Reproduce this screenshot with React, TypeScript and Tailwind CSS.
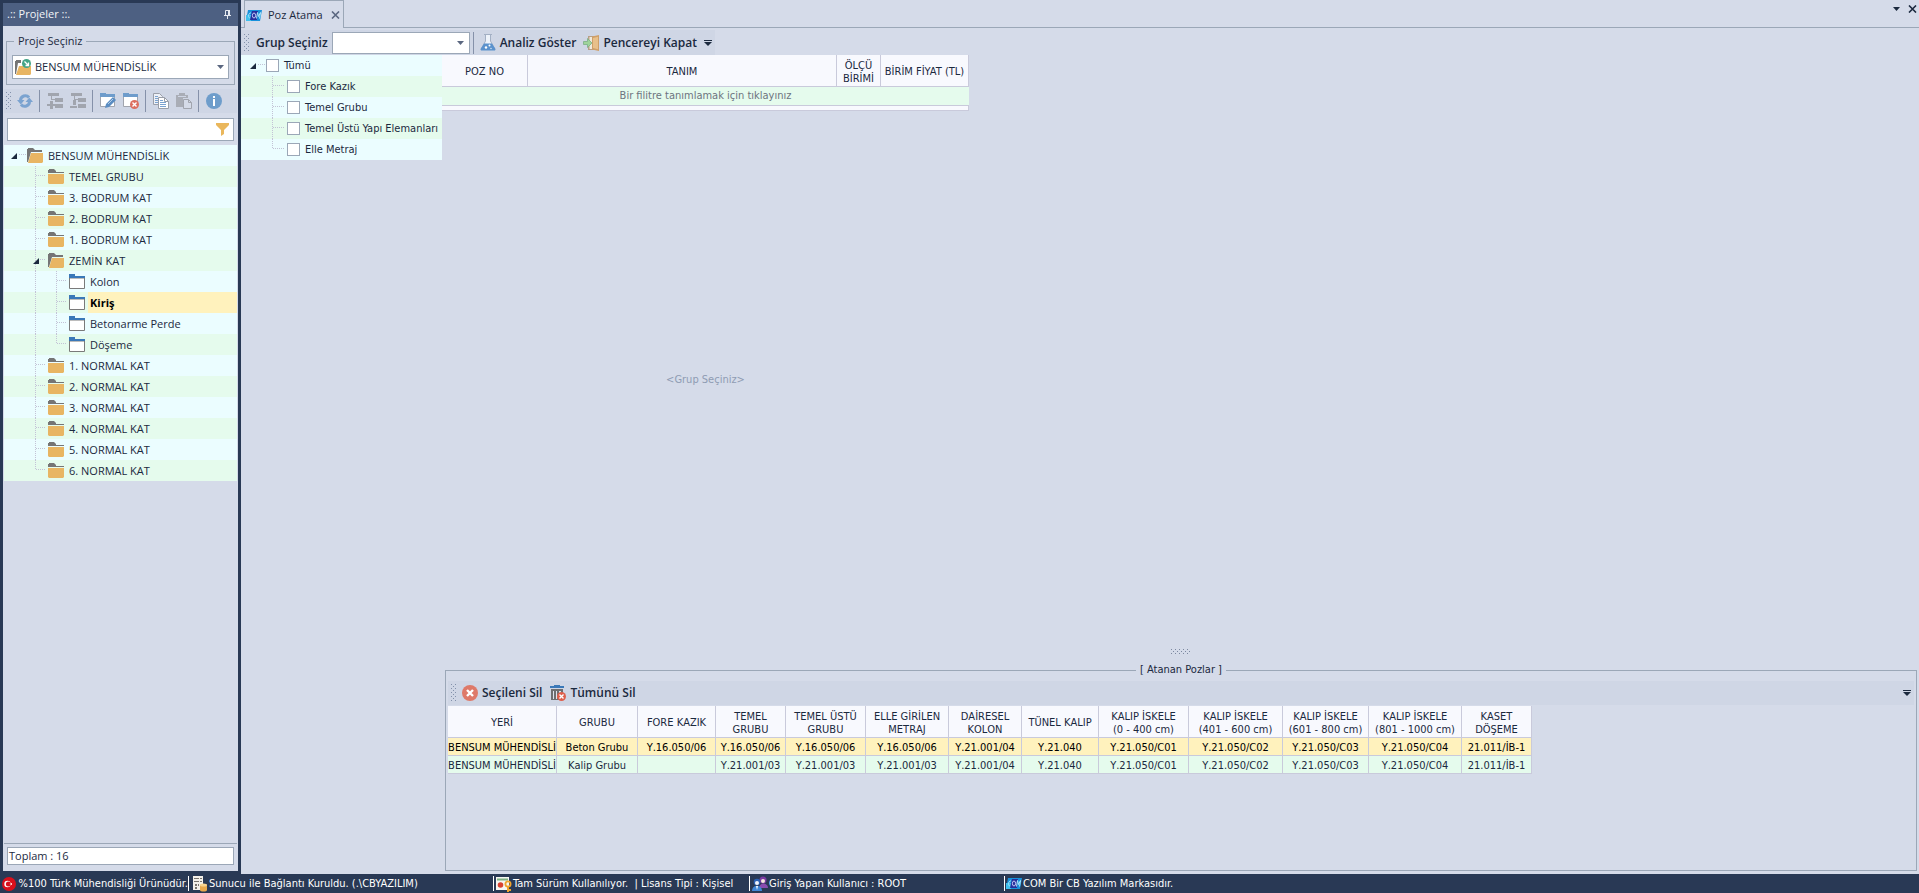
import React from 'react';
import { clsx } from 'clsx';

type NodeIcon = 'open' | 'closed' | 'window';

interface TreeNode {
  label: string;
  level: number;
  icon: NodeIcon;
  expanded?: boolean;
  selected?: boolean;
  last?: boolean;
}

const projectNodes: TreeNode[] = [
  { label: 'BENSUM MÜHENDİSLİK', level: 0, icon: 'open', expanded: true },
  { label: 'TEMEL GRUBU', level: 1, icon: 'closed' },
  { label: '3. BODRUM KAT', level: 1, icon: 'closed' },
  { label: '2. BODRUM KAT', level: 1, icon: 'closed' },
  { label: '1. BODRUM KAT', level: 1, icon: 'closed' },
  { label: 'ZEMİN KAT', level: 1, icon: 'open', expanded: true },
  { label: 'Kolon', level: 2, icon: 'window' },
  { label: 'Kiriş', level: 2, icon: 'window', selected: true },
  { label: 'Betonarme Perde', level: 2, icon: 'window' },
  { label: 'Döşeme', level: 2, icon: 'window', last: true },
  { label: '1. NORMAL KAT', level: 1, icon: 'closed' },
  { label: '2. NORMAL KAT', level: 1, icon: 'closed' },
  { label: '3. NORMAL KAT', level: 1, icon: 'closed' },
  { label: '4. NORMAL KAT', level: 1, icon: 'closed' },
  { label: '5. NORMAL KAT', level: 1, icon: 'closed' },
  { label: '6. NORMAL KAT', level: 1, icon: 'closed', last: true },
];

const groups = ['Fore Kazık', 'Temel Grubu', 'Temel Üstü Yapı Elemanları', 'Elle Metraj'];

const assignedColumns = [
  { title: ['YERİ'], width: 'w-[109px]' },
  { title: ['GRUBU'], width: 'w-[81px]' },
  { title: ['FORE KAZIK'], width: 'w-[78px]' },
  { title: ['TEMEL', 'GRUBU'], width: 'w-[70px]' },
  { title: ['TEMEL ÜSTÜ', 'GRUBU'], width: 'w-[80px]' },
  { title: ['ELLE GİRİLEN', 'METRAJ'], width: 'w-[83px]' },
  { title: ['DAİRESEL', 'KOLON'], width: 'w-[73px]' },
  { title: ['TÜNEL KALIP'], width: 'w-[77px]' },
  { title: ['KALIP İSKELE', '(0 - 400 cm)'], width: 'w-[90px]' },
  { title: ['KALIP İSKELE', '(401 - 600 cm)'], width: 'w-[94px]' },
  { title: ['KALIP İSKELE', '(601 - 800 cm)'], width: 'w-[86px]' },
  { title: ['KALIP İSKELE', '(801 - 1000 cm)'], width: 'w-[93px]' },
  { title: ['KASET', 'DÖŞEME'], width: 'w-[70px]' },
];

const assignedRows = [
  ['BENSUM MÜHENDİSLİ', 'Beton Grubu', 'Y.16.050/06', 'Y.16.050/06', 'Y.16.050/06', 'Y.16.050/06', 'Y.21.001/04', 'Y.21.040', 'Y.21.050/C01', 'Y.21.050/C02', 'Y.21.050/C03', 'Y.21.050/C04', '21.011/İB-1'],
  ['BENSUM MÜHENDİSLİ', 'Kalip Grubu', '', 'Y.21.001/03', 'Y.21.001/03', 'Y.21.001/03', 'Y.21.001/04', 'Y.21.040', 'Y.21.050/C01', 'Y.21.050/C02', 'Y.21.050/C03', 'Y.21.050/C04', '21.011/İB-1'],
];

/* ---------- icons ---------- */

const ClosedFolder = () => (
  <svg width="16" height="15" viewBox="0 0 16 15" className="shrink-0">
    <path d="M0 4V1h1V0h5l2 2v1h8v1z" fill="#757575" />
    <path d="M0 5h16v9l-1 1H1l-1-1z" fill="#e8b563" />
  </svg>
);

const OpenFolder = () => (
  <svg width="16" height="15" viewBox="0 0 16 15" className="shrink-0">
    <path d="M0 14V1h1V0h5l2 2h7v2H4L1 14z" fill="#757575" />
    <path d="M4 5h12v9l-1 1H1z" fill="#e8b563" />
  </svg>
);

const WindowFolder = () => (
  <svg width="16" height="15" viewBox="0 0 16 15" className="shrink-0">
    <path d="M0 4V0h6v2h10v2z" fill="#3a78b8" />
    <path d="M.5 4v10.500h15V4z" fill="#fff" stroke="#7a7a7a" />
    <path d="M0 3h16v1H0z" fill="#3a78b8" />
  </svg>
);

const ProjectIcon = () => (
  <svg width="16" height="16" viewBox="0 0 16 16" className="shrink-0">
    <path d="M0 15V2h1V1h5v3H3L1 15z" fill="#757575" />
    <path d="M4 7h12v8l-1 1H1z" fill="#e8b563" />
    <circle cx="11.500" cy="4.500" r="4.500" fill="#43a488" />
    <path d="M9.500 2.500l4 4M13.500 3.500v3h-3" fill="none" stroke="#fff" strokeWidth="1.300" />
  </svg>
);

const PinIcon = () => (
  <svg width="7" height="9" viewBox="0 0 7 9">
    <path d="M1.500 5V.5h4V5M0 5.500h7M3.500 6v3" fill="none" stroke="#e6eaf2" />
    <path d="M4 0h2v5H4z" fill="#e6eaf2" />
  </svg>
);

const RefreshIcon = () => (
  <svg width="16" height="16" viewBox="0 0 16 16">
    <path d="M3.500 7.500A4.800 4.800 0 0 1 12 4.500M12.500 8.500A4.800 4.800 0 0 1 4 11.500" fill="none" stroke="#7ba3d0" strokeWidth="3" />
    <path d="M0 7h7.500l-3.700 4.500zM8.500 9H16l-3.700-4.500z" fill="#7ba3d0" />
  </svg>
);

const AddNodeIcon = () => (
  <svg width="16" height="16" viewBox="0 0 16 16" fill="#a1a5ae">
    <path d="M1 0h11v3H1zM8 5h8v4H8zM8 11h8v4H8zM4 3h1v4H4zM5 6h3v1H5z" />
    <path d="M3 8h3v3h3v2H6v3H3v-3H0v-2h3z" />
  </svg>
);

const NodeListIcon = () => (
  <svg width="16" height="16" viewBox="0 0 16 16" fill="#a1a5ae">
    <path d="M1 0h11v3H1zM8 5h8v4H8zM8 11h8v4H8zM4 3h1v4H4zM5 6h3v1H5zM3 7h3v5H3zM0 13h7v2H0z" />
  </svg>
);

const FolderEditIcon = () => (
  <svg width="16" height="16" viewBox="0 0 16 16">
    <path d="M.5 3v10.500h14V3z" fill="#fff" stroke="#a1a5ae" />
    <path d="M0 3V0h6v1h9v3H0z" fill="#6e9ccb" />
    <path d="M5 15l1-4 7-7 3 3-7 7z" fill="#5b8dc2" />
    <path d="M8 11l5-5" stroke="#b5cde6" />
  </svg>
);

const FolderDeleteIcon = () => (
  <svg width="16" height="16" viewBox="0 0 16 16">
    <path d="M.5 3v10.500h14V3z" fill="#fff" stroke="#a1a5ae" />
    <path d="M0 3V0h6v1h9v3H0z" fill="#6e9ccb" />
    <circle cx="11.500" cy="11.500" r="4.500" fill="#dc6f60" />
    <path d="M9.500 9.500l4 4m0-4l-4 4" stroke="#fff" strokeWidth="1.400" />
  </svg>
);

const CopyIcon = () => (
  <svg width="16" height="16" viewBox="0 0 16 16">
    <path d="M.5.500h6l3 3v8h-9z" fill="#eef1f7" stroke="#9a9fa9" />
    <path d="M2 3.500h3M2 5.500h4M2 7.500h3M2 9.500h3" stroke="#7ba3d0" />
    <path d="M5.500 4.500h6l4 4v7h-10z" fill="#fff" stroke="#9a9fa9" />
    <path d="M11.500 4.500v4h4" fill="none" stroke="#9a9fa9" />
    <path d="M7 7.500h3M7 9.500h6M7 11.500h6M7 13.500h6" stroke="#7ba3d0" />
  </svg>
);

const PasteIcon = () => (
  <svg width="16" height="16" viewBox="0 0 16 16">
    <path d="M0 2h3V0h6v2h3v3H7v9H0z" fill="#a9adb6" />
    <path d="M2 3.500h8" stroke="#cfd6e5" />
    <path d="M7.500 6.500h5l3 3v6h-8z" fill="#d5dbe8" stroke="#a1a5ae" />
    <path d="M12.500 6.500v3h3" fill="none" stroke="#a1a5ae" />
  </svg>
);

const InfoIcon = () => (
  <svg width="16" height="16" viewBox="0 0 16 16">
    <circle cx="8" cy="8" r="8" fill="#6e9dcb" />
    <path d="M7 3h2v2H7zM7 6h2v7H7z" fill="#fff" />
  </svg>
);

const FunnelIcon = () => (
  <svg width="13" height="13" viewBox="0 0 13 13">
    <path d="M0 0h13v2L8 7v4l-3 2V7L0 2z" fill="#eab75c" />
  </svg>
);

const FlaskIcon = () => (
  <svg width="16" height="17" viewBox="0 0 16 17" className="shrink-0">
    <path d="M5.500 1v6L1 15.500h14L10.500 7V1" fill="#eef3fa" stroke="#a3b0c4" />
    <path d="M4 .5h8" stroke="#a3b0c4" />
    <path d="M4 9.500h8L15.500 15l-.5 1.500H1L.5 15z" fill="#5b92cd" />
    <circle cx="6" cy="13.500" r="1.200" fill="#fff" />
    <circle cx="9.500" cy="11.500" r="1" fill="#fff" />
    <circle cx="11" cy="14.500" r=".8" fill="#cfe0f3" />
  </svg>
);

const DoorIcon = () => (
  <svg width="16" height="16" viewBox="0 0 16 16" className="shrink-0">
    <path d="M5 1h10v14H5z" fill="#b89f86" />
    <path d="M6.500 2h3v12h-3z" fill="#efe9dc" />
    <path d="M9 1.500L16 0v16l-7-1.500z" fill="#cf9f68" />
    <path d="M10 3l5-1.200v12.400L10 13z" fill="#e8c08a" />
    <path d="M.5 6.500h4v-3L9 8l-4.500 4.500v-3h-4z" fill="#9fd49b" stroke="#7cae86" strokeWidth=".8" />
  </svg>
);

const DeleteIcon = () => (
  <svg width="16" height="16" viewBox="0 0 16 16" className="shrink-0">
    <circle cx="8" cy="8" r="8" fill="#de7969" />
    <path d="M5 5l6 6m0-6l-6 6" stroke="#fff" strokeWidth="2.400" />
  </svg>
);

const TrashIcon = () => (
  <svg width="16" height="16" viewBox="0 0 16 16" className="shrink-0">
    <path d="M0 1h4V0h6v1h4v2H0z" fill="#3a78b8" />
    <path d="M1 4h12v11H1z" fill="#6e6e70" />
    <path d="M3 6h1v8H3zM6 6h1v8H6zM9 6h2v8H9z" fill="#dfe3ec" />
    <circle cx="11.500" cy="11.500" r="4.500" fill="#de5f4c" />
    <path d="M9.500 9.500l4 4m0-4l-4 4" stroke="#fff" strokeWidth="1.400" />
  </svg>
);

const BrandIcon = () => (
  <svg width="16" height="11" viewBox="0 0 16 11" className="shrink-0">
    <path d="M2 0h14l-2 11H0z" fill="#1791dc" />
    <path d="M0 5h5v6H0z" fill="#3fc0ee" />
    <path d="M6 1h6l-1 9H4z" fill="#262f9c" />
    <path d="M5 3C2.500 2 1.500 8 4 8" fill="none" stroke="#9fe3fb" />
    <ellipse cx="8" cy="5.500" rx="1.600" ry="2.500" fill="none" stroke="#c3c8f5" />
    <path d="M10.500 8.500l1-6 1 4 2-4-1 6" fill="none" stroke="#a9e6fb" />
  </svg>
);

const FlagIcon = () => (
  <svg width="14" height="14" viewBox="0 0 14 14" className="shrink-0">
    <circle cx="7" cy="7" r="7" fill="#d9101c" />
    <circle cx="5.500" cy="7" r="3.200" fill="#fff" />
    <circle cx="6.400" cy="7" r="2.500" fill="#d9101c" />
    <path d="M7.500 7l2.500-1v2z" fill="#fff" />
  </svg>
);

const ServerIcon = () => (
  <svg width="15" height="16" viewBox="0 0 15 16" className="shrink-0">
    <path d="M0 0h10v14H0z" fill="#f3f0ea" />
    <path d="M1 2.500h5M7 2.500h2M1 5.500h5M7 5.500h2" stroke="#77736d" />
    <path d="M2 8h2v2H2zM5 8h1v2H5zM2 11h2v2H2z" fill="#77736d" />
    <path d="M7 9v5c0 2 7 2 7 0V9z" fill="#e8a94c" />
    <ellipse cx="10.500" cy="9" rx="3.500" ry="1.500" fill="#f8d48f" />
  </svg>
);

const LicenseIcon = () => (
  <svg width="16" height="16" viewBox="0 0 16 16" className="shrink-0">
    <path d="M0 1h13v13H0z" fill="#f6f6f2" />
    <path d="M1 3.500h11" stroke="#7fb183" strokeWidth="2" />
    <circle cx="4.500" cy="9" r="2.800" fill="#d8412f" />
    <circle cx="12" cy="8" r="2.600" fill="none" stroke="#f0a42c" strokeWidth="1.800" />
    <path d="M11 11h2v5h-2zM13 13h2v2h-2z" fill="#f0a42c" />
  </svg>
);

const UsersIcon = () => (
  <svg width="16" height="16" viewBox="0 0 16 16" className="shrink-0">
    <circle cx="11" cy="4" r="3.500" fill="#7a3aa0" />
    <path d="M7 12c0-6 9-6 9 0z" fill="#8a4bb0" />
    <circle cx="11" cy="5" r="2" fill="#f5e6de" />
    <circle cx="5" cy="6" r="3.300" fill="#2c62b4" />
    <path d="M0 15c0-7 10-7 10 0z" fill="#3f86d6" />
    <circle cx="5" cy="7" r="2" fill="#f2f4fa" />
    <path d="M4 10h2l-1 4z" fill="#fff" />
  </svg>
);

const CaretIcon = ({ className = 'text-[#5b6780]' }: { className?: string }) => (
  <svg width="7" height="4" viewBox="0 0 7 4" className={clsx('pointer-events-none shrink-0', className)}>
    <path d="M0 0h7L3.500 4z" fill="currentColor" />
  </svg>
);

const CloseIcon = ({ className = 'text-[#5b6780]' }: { className?: string }) => (
  <svg width="9" height="8" viewBox="0 0 9 8" className={className}>
    <path d="M1 .5l7 7m0-7l-7 7" stroke="currentColor" strokeWidth="1.600" />
  </svg>
);

const OverflowIcon = () => (
  <svg width="8" height="6" viewBox="0 0 8 6">
    <path d="M0 0h8v1H0zM0 2h8L4 6z" fill="#1b293e" />
  </svg>
);

/* ---------- small parts ---------- */

const Grip = () => (
  <svg width="6" height="18" viewBox="0 0 6 18" className="shrink-0">
    {[0, 4, 8, 12, 16].map((y) => (
      <path key={y} d={`M0 ${y}h1v1H0zM4 ${y}h1v1H4zM2 ${y + 2}h1v1H2z`} fill="#8391ab" />
    ))}
  </svg>
);

const Separator = () => <div className="mx-[3px] h-[22px] w-px shrink-0 bg-[#8591a9]" />;

const ToolButton = ({ label, children }: { label: string; children: React.ReactNode }) => (
  <button type="button" aria-label={label} className="flex h-6 w-[23px] items-center justify-center">
    {children}
  </button>
);

const TextButton = ({ icon, children }: { icon: React.ReactNode; children: React.ReactNode }) => (
  <button type="button" className="flex h-6 items-center gap-1 font-['Open_Sans',sans-serif] text-xs font-semibold">
    {icon}
    {children}
  </button>
);

const Expander = () => (
  <svg width="21" height="21" viewBox="0 0 21 21" className="shrink-0">
    <path d="M5 14h6V8z" fill="#1b293e" />
    <path d="M13 9.500h7" stroke="#c3c3d6" strokeDasharray="1 1" />
  </svg>
);

// Dotted connector; `x` is where the vertical line runs inside the cell.
const Guide = ({ x, branch, last, arrow }: { x: number; branch?: boolean; last?: boolean; arrow?: boolean }) => (
  <svg width="21" height="21" viewBox="0 0 21 21" className="shrink-0">
    <path d={`M${x + 0.5} 0v${last ? 10 : 21}`} stroke="#c3c3d6" strokeDasharray="1 1" />
    {branch && <path d={`M${arrow ? 13 : x + 1} 9.500H19`} stroke="#c3c3d6" strokeDasharray="1 1" />}
    {arrow && <path d="M6 14h6V8z" fill="#1b293e" />}
  </svg>
);

const stripe = (index: number) => (index % 2 === 0 ? 'bg-[#ebfdff]' : 'bg-[#e5fbed]');

const NodeGlyph = ({ icon }: { icon: NodeIcon }) => {
  if (icon === 'open') return <OpenFolder />;
  if (icon === 'closed') return <ClosedFolder />;
  return <WindowFolder />;
};

const ProjectTree = () => (
  <ul className="mx-px mt-1">
    {projectNodes.map((node, i) => (
      <li key={node.label} className={clsx('flex h-[21px] items-center pl-[2px]', stripe(i))}>
        {node.level === 0 ? <Expander /> : <span className="w-[21px] shrink-0" />}
        {node.level === 1 && <Guide x={8} branch last={node.last} arrow={node.expanded} />}
        {node.level === 2 && (
          <>
            <Guide x={8} />
            <Guide x={8} branch last={node.last} />
          </>
        )}
        <NodeGlyph icon={node.icon} />
        <span
          className={clsx(
            'ml-[3px] flex h-full flex-1 items-center pt-px pl-[2px]',
            node.selected && 'bg-[#fff2bd] font-bold text-black',
          )}
        >
          {node.label}
        </span>
      </li>
    ))}
  </ul>
);

const Sidebar = () => (
  <aside className="mt-[3px] mb-[3px] flex w-[235px] shrink-0 flex-col bg-[#d5dbe9] font-['Open_Sans',sans-serif] text-[11px]">
    <header className="flex h-[23px] items-center justify-between bg-[#4d6082] pr-[7px] pl-1 text-[#f2f4f8]">
      <h2>.:: Projeler ::.</h2>
      <button type="button" aria-label="Sabitle">
        <PinIcon />
      </button>
    </header>

    <fieldset className="mx-[3px] mt-[7px] border border-[#9ba7b7] px-[5px] pb-[5px]">
      <legend className="ml-[2px] px-1 leading-4">
        <label htmlFor="proje">Proje Seçiniz</label>
      </legend>
      <div className="mt-[6px] flex h-6 items-center border border-[#9ba7b7] bg-white pr-1 pl-[2px]">
        <ProjectIcon />
        <select id="proje" className="min-w-0 flex-1 appearance-none pl-1 outline-none">
          <option>BENSUM MÜHENDİSLİK</option>
        </select>
        <CaretIcon />
      </div>
    </fieldset>

    <div className="mx-px mt-1 flex h-6 items-center bg-[#cfd6e5] pl-[2px]">
      <Grip />
      <div className="ml-px flex items-center">
        <ToolButton label="Yenile"><RefreshIcon /></ToolButton>
        <Separator />
        <ToolButton label="Ekle"><AddNodeIcon /></ToolButton>
        <ToolButton label="Alt düğüm"><NodeListIcon /></ToolButton>
        <Separator />
        <ToolButton label="Düzenle"><FolderEditIcon /></ToolButton>
        <ToolButton label="Sil"><FolderDeleteIcon /></ToolButton>
        <Separator />
        <ToolButton label="Kopyala"><CopyIcon /></ToolButton>
        <ToolButton label="Yapıştır"><PasteIcon /></ToolButton>
        <Separator />
        <ToolButton label="Bilgi"><InfoIcon /></ToolButton>
      </div>
    </div>

    <div className="mx-1 mt-[5px] flex h-[23px] items-center border border-[#9ba7b7] bg-white pr-1">
      <input type="text" aria-label="Ara" className="min-w-0 flex-1 px-1 outline-none" />
      <FunnelIcon />
    </div>

    <ProjectTree />

    <footer className="mx-px mt-auto border-t border-[#9ba7b7] px-[3px] pt-[3px] pb-[6px]">
      <output className="flex h-[18px] items-center border border-[#9ba7b7] bg-white px-px">Toplam : 16</output>
    </footer>
  </aside>
);

const GroupTree = () => (
  <ul className="w-[201px] shrink-0 self-start">
    <li className={clsx('flex h-[21px] items-center pl-1', stripe(0))}>
      <Expander />
      <input id="grup-tumu" type="checkbox" className="size-[13px] shrink-0 appearance-none border border-[#9ba7b7] bg-white" />
      <label htmlFor="grup-tumu" className="pt-[2px] pl-[5px]">Tümü</label>
    </li>
    {groups.map((group, i) => (
      <li key={group} className={clsx('flex h-[21px] items-center pl-1', stripe(i + 1))}>
        <span className="w-[21px] shrink-0" />
        <Guide x={6} branch last={i === groups.length - 1} />
        <input
          id={`grup-${i}`}
          type="checkbox"
          className="size-[13px] shrink-0 appearance-none border border-[#9ba7b7] bg-white"
        />
        <label htmlFor={`grup-${i}`} className="pt-[2px] pl-[5px] whitespace-nowrap">{group}</label>
      </li>
    ))}
  </ul>
);

const PozTable = () => (
  <table className="w-[527px] table-fixed border-separate border-spacing-0 text-center">
    <thead>
      <tr className="h-8 bg-[#f8f9fe] leading-[13px]">
        <th className="w-[86px] border-r border-b border-[#c9cadb] pt-[2px] font-normal">POZ NO</th>
        <th className="border-r border-b border-[#c9cadb] pt-[2px] font-normal">TANIM</th>
        <th className="w-[44px] border-r border-b border-[#c9cadb] pt-[2px] font-normal">ÖLÇÜ<br />BİRİMİ</th>
        <th className="w-[88px] border-r border-b border-[#c9cadb] pt-[2px] font-normal whitespace-nowrap">BİRİM FİYAT (TL)</th>
      </tr>
    </thead>
    <tbody>
      <tr className="h-[19px] bg-[#e5fbed] text-[#6d7480]">
        <td colSpan={4} className="border-b border-[#c9cadb]">Bir filitre tanımlamak için tıklayınız</td>
      </tr>
      <tr className="h-[5px] bg-[#f8f9fe]">
        <td colSpan={4} className="border-r border-b border-[#c9cadb]" />
      </tr>
    </tbody>
  </table>
);

const AssignedTable = () => (
  <table className="w-[1084px] table-fixed border-separate border-spacing-0 text-center [font-kerning:none]">
    <thead>
      <tr className="h-8 bg-[#f8f9fe] leading-[13px]">
        {assignedColumns.map((col) => (
          <th
            key={col.title.join(' ')}
            className={clsx('border-r border-b border-[#c9cadb] pt-[2px] font-normal whitespace-nowrap', col.width)}
          >
            {col.title.map((line) => (
              <span key={line} className="block">{line}</span>
            ))}
          </th>
        ))}
      </tr>
    </thead>
    <tbody>
      {assignedRows.map((row, r) => (
        <tr key={row[1]} className={clsx('h-[18px] leading-[13px]', r === 0 ? 'bg-[#fff2bd] text-black' : 'bg-[#e5fbed]')}>
          {row.map((cell, c) => (
            <td key={c} className="overflow-hidden border-r border-b border-[#c9cadb] pt-[2px] whitespace-nowrap">
              {cell}
            </td>
          ))}
        </tr>
      ))}
    </tbody>
  </table>
);

const AssignedPanel = () => (
  <fieldset className="mr-[2px] mb-[3px] ml-[3px] flex h-[209px] min-w-0 shrink-0 flex-col border border-[#9ba7b7] px-[2px]">
    <legend className="mx-auto px-1 leading-4">[ Atanan Pozlar ]</legend>
    <div className="mt-[3px] flex h-6 shrink-0 items-center bg-[#cfd6e5] pr-[3px] pl-[3px]">
      <Grip />
      <div className="ml-[5px] flex flex-1 gap-2">
        <TextButton icon={<DeleteIcon />}>Seçileni Sil</TextButton>
        <TextButton icon={<TrashIcon />}>Tümünü Sil</TextButton>
      </div>
      <button type="button" aria-label="Araç çubuğu seçenekleri"><OverflowIcon /></button>
    </div>
    <div className="mt-px min-h-0 flex-1">
      <AssignedTable />
    </div>
  </fieldset>
);

const Workspace = () => (
  <main className="ml-[3px] flex min-w-0 flex-1 flex-col bg-[#d5dbe9]">
    <div className="flex h-7 shrink-0">
      <div className="w-[3px] border-b border-[#9ba7b7]" />
      <div className="flex w-[100px] items-center border-x border-t border-[#9ba7b7] pt-px pl-px font-['Open_Sans',sans-serif]">
        <BrandIcon />
        <span className="flex-1 pl-[6px] whitespace-nowrap">Poz Atama</span>
        <button type="button" aria-label="Sekmeyi kapat" className="mr-[3px]"><CloseIcon /></button>
      </div>
      <div className="flex flex-1 items-start justify-end gap-2 border-b border-[#9ba7b7] pt-[5px] pr-[2px]">
        <button type="button" aria-label="Pencereler" className="flex h-2 items-center">
          <CaretIcon className="text-[#1b293e]" />
        </button>
        <button type="button" aria-label="Pencereyi kapat">
          <CloseIcon className="text-[#1b293e]" />
        </button>
      </div>
    </div>

    <div className="mt-[2px] flex h-[25px] shrink-0 items-center self-start bg-[#cfd6e5] pr-[3px] pl-[3px]">
      <Grip />
      <label htmlFor="grup" className="ml-[6px] font-['Open_Sans',sans-serif] text-xs font-semibold">Grup Seçiniz</label>
      <div className="ml-1 flex h-[22px] w-[138px] items-center border border-[#9ba7b7] bg-white pr-[5px]">
        <select id="grup" className="h-full min-w-0 flex-1 appearance-none outline-none" />
        <CaretIcon />
      </div>
      <Separator />
      <div className="ml-[3px] flex items-center gap-[7px]">
        <TextButton icon={<FlaskIcon />}>Analiz Göster</TextButton>
        <TextButton icon={<DoorIcon />}>Pencereyi Kapat</TextButton>
        <button type="button" aria-label="Araç çubuğu seçenekleri"><OverflowIcon /></button>
      </div>
    </div>

    <div className="flex min-h-0 flex-1">
      <GroupTree />
      <div className="flex min-w-0 flex-1 flex-col">
        <div className="flex w-[527px] flex-1 flex-col">
          <PozTable />
          <div className="flex flex-1 items-center justify-center text-[#8f9bb3]">&lt;Grup Seçiniz&gt;</div>
        </div>
        <div className="flex h-[13px] shrink-0 justify-center">
          <svg width="19" height="5" viewBox="0 0 19 5">
            {[0, 4, 8, 12, 16].map((x) => (
              <path key={x} d={`M${x} 0h1v1h-1zM${x} 4h1v1h-1zM${x + 2} 2h1v1h-1z`} fill="#7c88a0" />
            ))}
          </svg>
        </div>
        <AssignedPanel />
      </div>
    </div>
  </main>
);

const StatusItem = ({ icon, width, children }: { icon: React.ReactNode; width: string; children: React.ReactNode }) => (
  <div className={clsx('flex h-full shrink-0 items-center gap-px whitespace-nowrap', width)}>
    {icon}
    <span className="pt-[2px]">{children}</span>
  </div>
);

const StatusBar = () => (
  <footer className="flex h-[19px] shrink-0 items-center pl-[2px] text-white">
    <StatusItem icon={<><FlagIcon /><i className="w-px" /></>} width="w-[186px]">%100 Türk Mühendisliği Ürünüdür.</StatusItem>
    <div className="mr-1 h-[15px] w-px bg-white" />
    <StatusItem icon={<ServerIcon />} width="w-[300px]">Sunucu ile Bağlantı Kuruldu. (.\CBYAZILIM)</StatusItem>
    <div className="mr-[2px] h-[15px] w-px bg-white" />
    <StatusItem icon={<LicenseIcon />} width="w-[253px]">Tam Sürüm Kullanılıyor.&nbsp; | Lisans Tipi : Kişisel</StatusItem>
    <div className="mr-[2px] h-[15px] w-px bg-white" />
    <StatusItem icon={<UsersIcon />} width="w-[252px]">Giriş Yapan Kullanıcı : ROOT</StatusItem>
    <div className="mr-px h-[15px] w-px bg-white" />
    <StatusItem icon={<BrandIcon />} width="w-auto">COM Bir CB Yazılım Markasıdır.</StatusItem>
  </footer>
);

export default function App() {
  return (
    <div className="flex h-screen flex-col overflow-hidden bg-[#293955] font-['DejaVu_Sans_Condensed','DejaVu_Sans',sans-serif] text-[11px] text-[#1b293e]">
      <div className="flex min-h-0 flex-1 pl-[3px]">
        <Sidebar />
        <Workspace />
      </div>
      <StatusBar />
    </div>
  );
}
